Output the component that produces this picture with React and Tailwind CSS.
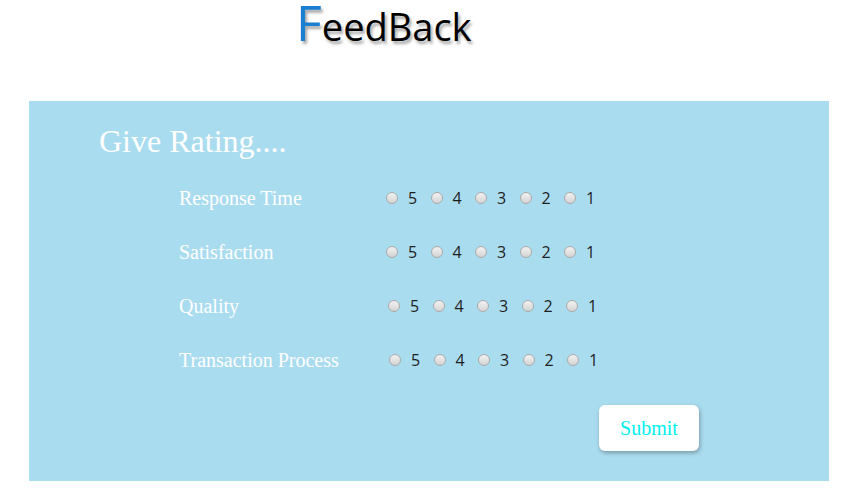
import React from 'react';

const criteria = [
    { label: 'Response Time', offset: 'ml-[1px]' },
    { label: 'Satisfaction', offset: 'ml-[1px]' },
    { label: 'Quality', offset: 'ml-[3px]' },
    { label: 'Transaction Process', offset: 'ml-[4px]' },
];

const Radio = () => (
    <span className="inline-block w-[12px] h-[12px] rounded-full border border-[#aaa] bg-gradient-to-b from-[#f2f2f2] to-[#d4d4d4]" />
);

export default function App() {
    return (
        <div className="w-[856px] h-[504px] bg-white">
            {/* Title */}
            <div className="h-[101px] pl-[296px]">
                <h1
                    className="flex items-baseline text-black [text-shadow:2px_3px_3px_rgba(0,0,0,0.35)]"
                    style={{ fontFamily: '"Open Sans", sans-serif' }}
                >
                    <span className="text-[50px] leading-[44px] text-[#1a7fd0]">F</span>
                    <span className="text-[38px] leading-[44px]">eedBack</span>
                </h1>
            </div>

            {/* Rating panel */}
            <div className="ml-[29px] w-[800px] h-[380px] bg-[#aadcf0]">
                <h2
                    className="pl-[70px] pt-[22px] text-[32px] leading-[36px] text-white"
                    style={{ fontFamily: '"Liberation Serif", serif' }}
                >
                    Give Rating....
                </h2>

                <div className="pl-[150px] pt-[27px] flex flex-col gap-[30px]">
                    {criteria.map((c) => (
                        <div key={c.label} className="flex items-center h-[24px]">
                            <span
                                className="w-[206px] text-[20px] text-white"
                                style={{ fontFamily: '"Liberation Serif", serif' }}
                            >
                                {c.label}
                            </span>
                            <div className={`flex items-center ${c.offset}`}>
                                {[5, 4, 3, 2, 1].map((n) => (
                                    <label key={n} className="flex items-center w-[44.5px]">
                                        <Radio />
                                        <span
                                            className="ml-[10px] text-[16px] text-[#1e1e1e]"
                                            style={{ fontFamily: '"Open Sans", sans-serif' }}
                                        >
                                            {n}
                                        </span>
                                    </label>
                                ))}
                            </div>
                        </div>
                    ))}
                </div>

                <div className="flex justify-end pr-[130px] pt-[33px]">
                    <button
                        className="w-[100px] h-[46px] rounded-[6px] bg-white text-[20px] text-[#00f0f0] shadow-[1px_2px_4px_rgba(0,0,0,0.3)]"
                        style={{ fontFamily: '"Liberation Serif", serif' }}
                    >
                        Submit
                    </button>
                </div>
            </div>
        </div>
    );
}
